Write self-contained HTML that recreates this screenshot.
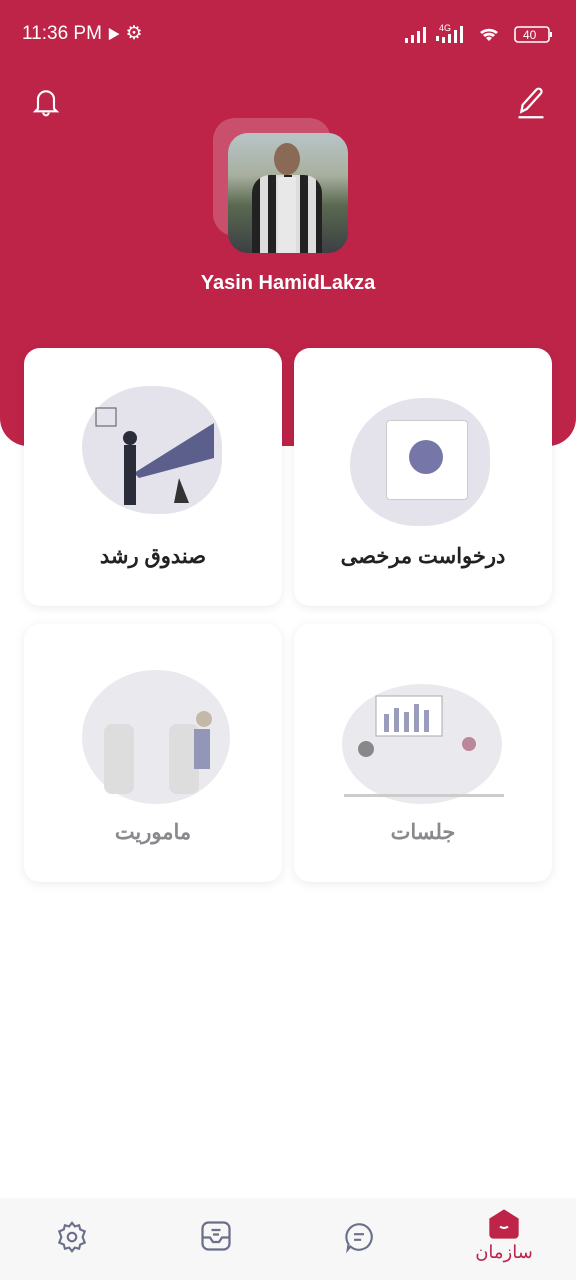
<!DOCTYPE html>
<html><head><meta charset="utf-8"><style>
*{margin:0;padding:0;box-sizing:border-box}
body{width:576px;height:1280px;background:#fff;font-family:"Liberation Sans","Noto Sans CJK SC",sans-serif;position:relative;overflow:hidden}
.hdr{position:absolute;left:0;top:0;width:576px;height:446px;background:#BD2448;border-radius:0 0 28px 28px}
.st{position:absolute;top:22px;color:#fff;font-size:19px}
.card{position:absolute;width:258px;height:258px;background:#fff;border-radius:16px;box-shadow:0 2px 10px rgba(0,0,0,.08)}
.card .t{position:absolute;left:0;right:0;top:196px;text-align:center;font-size:21px;font-weight:bold;color:#222}
.card.dim .t{color:#8a8a8e}
.blob{position:absolute;background:#e4e3ec;border-radius:50%}
.nav{position:absolute;left:0;top:1198px;width:576px;height:82px;background:#f7f7f8}
</style></head><body>
<div class="hdr"></div>
<div class="st" style="left:22px">11:36 PM <span style="font-size:13px">▶</span> ⚙</div>
<svg style="position:absolute;left:404px;top:22px" width="150" height="24" viewBox="0 0 150 24" fill="#fff">
<rect x="1" y="16" width="3" height="5"/><rect x="7" y="13" width="3" height="8"/><rect x="13" y="9" width="3" height="12"/><rect x="19" y="5" width="3" height="16"/>
<text x="35" y="9" font-size="9" font-family="Liberation Sans">4G</text>
<rect x="32" y="14" width="3" height="5"/><rect x="38" y="15" width="3" height="6"/><rect x="44" y="12" width="3" height="9"/><rect x="50" y="8" width="3" height="13"/><rect x="56" y="4" width="3" height="17"/>
<path d="M76 10a14 14 0 0118 0l-2 2a11 11 0 00-14 0zM79 13a9 9 0 0112 0l-2 2a6 6 0 00-8 0zM82 16a4 4 0 016 0l-3 3z"/>
<rect x="111" y="5" width="34" height="15" rx="3" fill="none" stroke="#fff" stroke-width="1.6"/><rect x="146" y="10" width="2" height="5"/>
<text x="119" y="17" font-size="12" font-family="Liberation Sans">40</text></svg>
<svg style="position:absolute;left:30px;top:86px" width="32" height="32" viewBox="0 0 24 24" fill="none" stroke="#fff" stroke-width="1.6"><path d="M6 17V10a6 6 0 0112 0v7l2 2H4z"/><path d="M10 20a2 2 0 004 0"/></svg>
<svg style="position:absolute;left:514px;top:84px" width="34" height="36" viewBox="0 0 24 26" fill="none" stroke="#fff" stroke-width="1.6"><path d="M5 20l1-5L16 4a2 2 0 013 3L9 18z"/><path d="M3 24h18"/></svg>
<div style="position:absolute;left:213px;top:118px;width:118px;height:118px;border-radius:22px;background:rgba(255,255,255,.2)"></div>
<div style="position:absolute;left:228px;top:133px;width:120px;height:120px;border-radius:20px;background:linear-gradient(180deg,#b8c4c8 0%,#a9b0a0 35%,#5a6a50 60%,#3c3f44 100%);overflow:hidden">
<div style="position:absolute;left:46px;top:10px;width:26px;height:32px;border-radius:50%;background:#8a6a55"></div>
<div style="position:absolute;left:24px;top:42px;width:70px;height:80px;border-radius:18px 18px 0 0;background:repeating-linear-gradient(90deg,#222 0 8px,#ddd 8px 16px)"></div>
<div style="position:absolute;left:50px;top:44px;width:18px;height:76px;background:#e8e8e8"></div></div>
<div style="position:absolute;left:0;right:0;top:272px;text-align:center;color:#fff;font-size:20px;font-weight:bold">Yasin HamidLakza</div>

<div class="card" style="left:24px;top:348px">
<div class="blob" style="left:58px;top:38px;width:140px;height:128px;border-radius:50% 50% 45% 55%"></div>
<svg style="position:absolute;left:60px;top:35px" width="140" height="150"><path d="M50 90 L130 40 L130 75 L55 95z" fill="#5c5f8c"/><rect x="40" y="62" width="12" height="60" fill="#2a2c3a"/><circle cx="46" cy="55" r="7" fill="#2a2c3a"/><path d="M90 120l5-25 10 25z" fill="#333"/><rect x="12" y="25" width="20" height="18" fill="none" stroke="#555"/></svg>
<div class="t">صندوق رشد</div></div>

<div class="card" style="left:294px;top:348px">
<div class="blob" style="left:56px;top:50px;width:140px;height:128px;border-radius:55% 45% 50% 50%"></div>
<div style="position:absolute;left:92px;top:72px;width:82px;height:80px;background:#fff;border:1px solid #ccc;border-radius:4px"></div>
<div style="position:absolute;left:115px;top:92px;width:34px;height:34px;border-radius:50%;background:#7677a8"></div>
<div class="t">درخواست مرخصی</div></div>

<div class="card dim" style="left:24px;top:624px">
<div class="blob" style="left:58px;top:46px;width:148px;height:134px;background:#eaeaee"></div>
<svg style="position:absolute;left:60px;top:60px" width="150" height="130"><rect x="20" y="40" width="30" height="70" rx="8" fill="#ddd"/><rect x="85" y="40" width="30" height="70" rx="8" fill="#ddd"/><circle cx="120" cy="35" r="8" fill="#c4b8a8"/><rect x="110" y="45" width="16" height="40" fill="#9496b8"/></svg>
<div class="t">ماموریت</div></div>

<div class="card dim" style="left:294px;top:624px">
<div class="blob" style="left:48px;top:60px;width:160px;height:120px;background:#eaeaee"></div>
<svg style="position:absolute;left:50px;top:70px" width="160" height="110"><rect x="32" y="2" width="66" height="40" fill="#fff" stroke="#aaa"/><g fill="#9a9cbc"><rect x="40" y="20" width="5" height="18"/><rect x="50" y="14" width="5" height="24"/><rect x="60" y="18" width="5" height="20"/><rect x="70" y="10" width="5" height="28"/><rect x="80" y="16" width="5" height="22"/></g><circle cx="22" cy="55" r="8" fill="#888"/><circle cx="125" cy="50" r="7" fill="#b89"/><rect x="0" y="100" width="160" height="3" fill="#ccc"/></svg>
<div class="t">جلسات</div></div>

<div class="nav">
<svg style="position:absolute;left:55px;top:22px" width="34" height="34" viewBox="0 0 24 24" fill="none" stroke="#6b6f8a" stroke-width="1.5"><circle cx="12" cy="12" r="3"/><path d="M12 2l2 2.5 3-.8.8 3L21 8l-1.5 4L21 16l-3.2 1.3-.8 3-3-.8L12 22l-2-2.5-3 .8-.8-3L3 16l1.5-4L3 8l3.2-1.3.8-3 3 .8z"/></svg>
<svg style="position:absolute;left:198px;top:20px" width="36" height="36" viewBox="0 0 24 24" fill="none" stroke="#6b6f8a" stroke-width="1.5"><rect x="3" y="3" width="18" height="18" rx="4"/><path d="M3 13h5l2 3h4l2-3h5M9 8h6M10 11h4"/></svg>
<svg style="position:absolute;left:342px;top:22px" width="34" height="34" viewBox="0 0 24 24" fill="none" stroke="#6b6f8a" stroke-width="1.5"><path d="M12 3a9 9 0 11-6 15.7L4 21l.6-4A9 9 0 0112 3z"/><path d="M8.5 10h7M8.5 14h5"/></svg>
<svg style="position:absolute;left:488px;top:10px" width="32" height="32" viewBox="0 0 24 24"><path d="M12 1L23 8v12a3 3 0 01-3 3H4a3 3 0 01-3-3V8z" fill="#BD2448"/><path d="M9 14q3 2 6 0" stroke="#fff" stroke-width="1.6" fill="none"/></svg>
<div style="position:absolute;left:472px;top:44px;width:64px;text-align:center;color:#BD2448;font-size:18px">سازمان</div>
</div>
</body></html>
